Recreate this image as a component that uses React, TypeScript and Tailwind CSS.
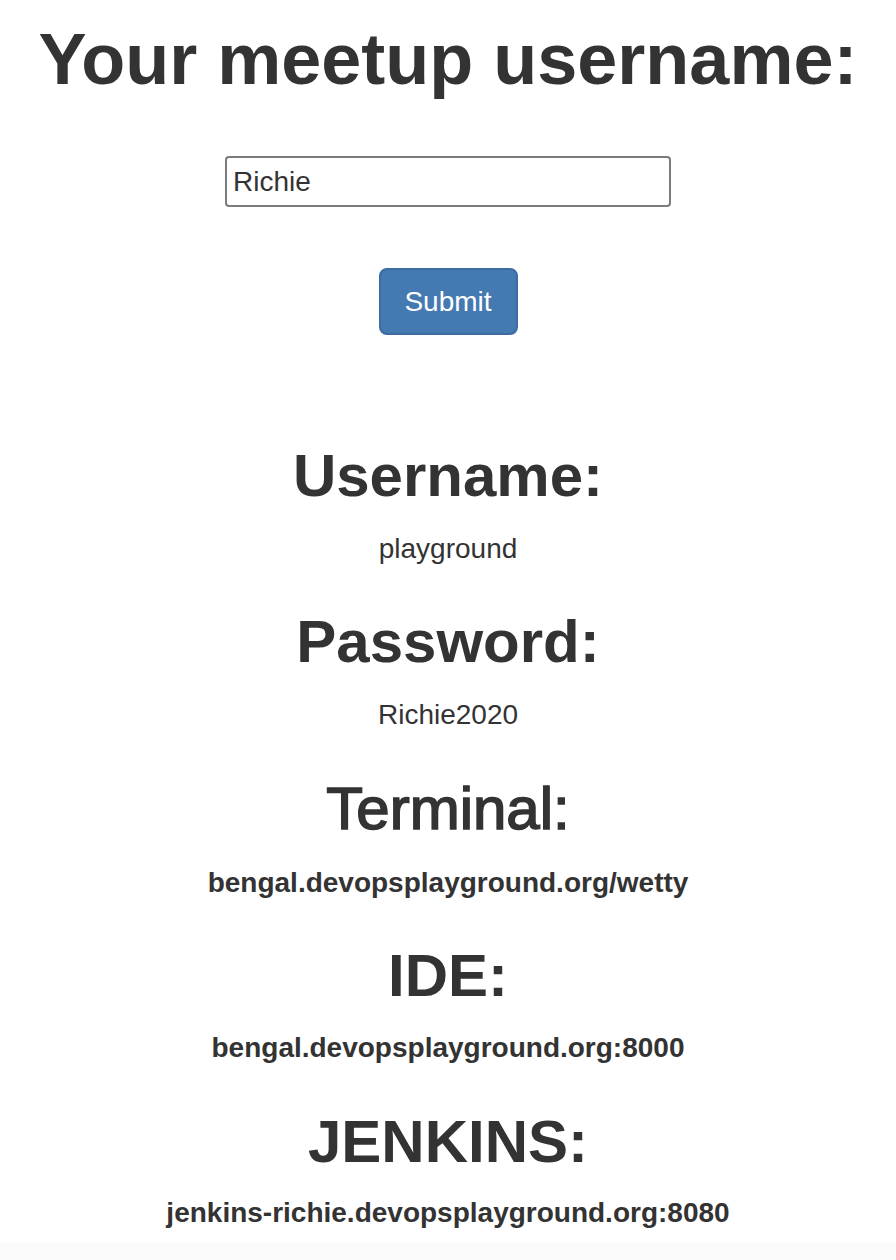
import { useState } from 'react'

const font = { fontFamily: '"Liberation Sans", Arial, Helvetica, sans-serif' }

export default function App() {
  const [name, setName] = useState('Richie')

  return (
    <div className="min-h-[1260px] w-full flex flex-col bg-[#fafafa] text-[#333]" style={font}>
      <div className="flex flex-col items-center bg-white pt-[19px] pb-[10px] text-center">
        <h1 className="text-[72px] leading-[80px] font-bold">Your meetup username:</h1>

        <form
          onSubmit={(e) => e.preventDefault()}
          className="flex flex-col items-center"
        >
          <input
            type="text"
            value={name}
            onChange={(e) => setName(e.target.value)}
            className="mt-[57px] h-[51px] w-[446px] rounded-[4px] border-2 border-[#7c7c7c] bg-white px-[6px] text-[28px] text-[#333] outline-none"
          />
          <button
            type="submit"
            className="mt-[61px] h-[67px] w-[139px] rounded-[8px] border-2 border-[#3c6ca1] bg-[#4579b1] text-[28px] text-white"
          >
            Submit
          </button>
        </form>

        <h2 className="mt-[108px] text-[60px] leading-[66px] font-bold">Username:</h2>
        <p className="mt-5 text-[28px] leading-[40px]">playground</p>

        <h2 className="mt-10 text-[60px] leading-[66px] font-bold">Password:</h2>
        <p className="mt-5 text-[28px] leading-[40px]">Richie2020</p>

        {/* medium weight in the original; regular + stroke stands in for it */}
        <h2 className="mt-[41px] text-[60px] leading-[66px] font-normal [-webkit-text-stroke:1.6px_#333]">
          Terminal:
        </h2>
        <p className="mt-[21px] text-[28px] leading-[40px] font-bold">bengal.devopsplayground.org/wetty</p>

        <h2 className="mt-[40px] text-[60px] leading-[66px] font-bold">IDE:</h2>
        <p className="mt-[19px] text-[28px] leading-[40px] font-bold">bengal.devopsplayground.org:8000</p>

        <h2 className="mt-[41px] text-[60px] leading-[66px] font-bold">JENKINS:</h2>
        <p className="mt-[18px] text-[28px] leading-[40px] font-bold">jenkins-richie.devopsplayground.org:8080</p>
      </div>
    </div>
  )
}
